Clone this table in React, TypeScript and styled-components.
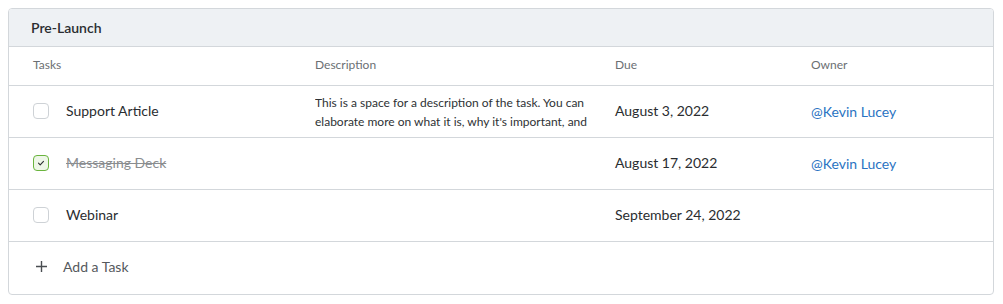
import * as React from 'react';
import styled, { createGlobalStyle } from 'styled-components';

const GlobalStyle = createGlobalStyle`
    *, *::before, *::after {
        box-sizing: border-box;
    }
    body {
        margin: 8px;
        background: #ffffff;
        font-family: Lato, "Noto Sans", sans-serif;
        color: #222;
    }
`;

type Task = {
    name: string;
    description?: string;
    due: string;
    owner?: string;
    done?: boolean;
};

const tasks: Task[] = [
    {
        name: 'Support Article',
        description: "This is a space for a description of the task. You can elaborate more on what it is, why it's important, and",
        due: 'August 3, 2022',
        owner: '@Kevin Lucey',
    },
    { name: 'Messaging Deck', due: 'August 17, 2022', owner: '@Kevin Lucey', done: true },
    { name: 'Webinar', due: 'September 24, 2022' },
];

const Card = styled.section`
    width: 986px;
    border: 1px solid #d3d7db;
    border-radius: 4px;
    overflow: hidden;
    background: #fff;
`;

const CardHeader = styled.header`
    height: 38px;
    display: flex;
    align-items: center;
    padding: 0 22px;
    background: #eef1f4;
    border-bottom: 1px solid #d3d7db;
    font-size: 14px;
    font-weight: 600;
    color: #2a2d30;
`;

const Row = styled.div<{ $height: number }>`
    display: grid;
    grid-template-columns: 282px 300px 196px 1fr;
    align-items: center;
    height: ${(p) => p.$height}px;
    padding: 0 0 3px 24px;
    border-bottom: 1px solid #d3d7db;
`;

const ColumnLabel = styled.div`
    font-size: 12px;
    color: #6b6f73;
`;

const TaskCell = styled.label`
    display: flex;
    align-items: center;
    gap: 17px;
    font-size: 14px;
`;

const Check = styled.span<{ $checked?: boolean }>`
    width: 16px;
    height: 16px;
    border-radius: 4px;
    border: 1px solid ${(p) => (p.$checked ? '#6ab43e' : '#ced2d6')};
    background: ${(p) => (p.$checked ? '#eef7e8' : '#fff')};
    display: flex;
    align-items: center;
    justify-content: center;
    margin-top: 2px;
`;

const TaskName = styled.span<{ $done?: boolean }>`
    color: ${(p) => (p.$done ? '#8a8d90' : '#2a2d30')};
    text-decoration: ${(p) => (p.$done ? 'line-through' : 'none')};
`;

const Description = styled.div`
    font-size: 12px;
    line-height: 19px;
    color: #2e3134;
    height: 38px;
    overflow: hidden;
    padding-right: 20px;
    margin-top: 3px;
`;

const DueCell = styled.div`
    font-size: 14px;
    color: #2a2d30;
`;

const OwnerLink = styled.a`
    font-size: 14px;
    color: #2a73c2;
    text-decoration: none;
`;

const AddRow = styled.button`
    display: flex;
    align-items: center;
    gap: 16px;
    width: 100%;
    height: 52px;
    padding: 0 0 3px 27px;
    border: none;
    background: none;
    font-family: inherit;
    font-size: 14px;
    color: #55595d;
    cursor: pointer;
`;

const CheckMark = () => (
    <svg width="8" height="8" viewBox="0 0 8 8" fill="none">
        <path d="M1.5 4.2 L3.2 5.8 L6.5 2.3" stroke="#2d3033" strokeWidth="1.1" strokeLinecap="round" strokeLinejoin="round" />
    </svg>
);

const PlusIcon = () => (
    <svg width="11" height="11" viewBox="0 0 11 11" fill="none">
        <path d="M5.5 0 V11 M0 5.5 H11" stroke="#4a4e52" strokeWidth="1.4" />
    </svg>
);

export default function App() {
    return (
        <>
            <GlobalStyle />
            <Card>
                <CardHeader>Pre-Launch</CardHeader>
                <Row $height={39}>
                    <ColumnLabel>Tasks</ColumnLabel>
                    <ColumnLabel>Description</ColumnLabel>
                    <ColumnLabel>Due</ColumnLabel>
                    <ColumnLabel>Owner</ColumnLabel>
                </Row>
                {tasks.map((task) => (
                    <Row $height={52} key={task.name}>
                        <TaskCell>
                            <Check $checked={task.done}>{task.done && <CheckMark />}</Check>
                            <TaskName $done={task.done}>{task.name}</TaskName>
                        </TaskCell>
                        <Description>{task.description}</Description>
                        <DueCell>{task.due}</DueCell>
                        <div>{task.owner && <OwnerLink href="#">{task.owner}</OwnerLink>}</div>
                    </Row>
                ))}
                <AddRow type="button">
                    <PlusIcon />
                    Add a Task
                </AddRow>
            </Card>
        </>
    );
}
